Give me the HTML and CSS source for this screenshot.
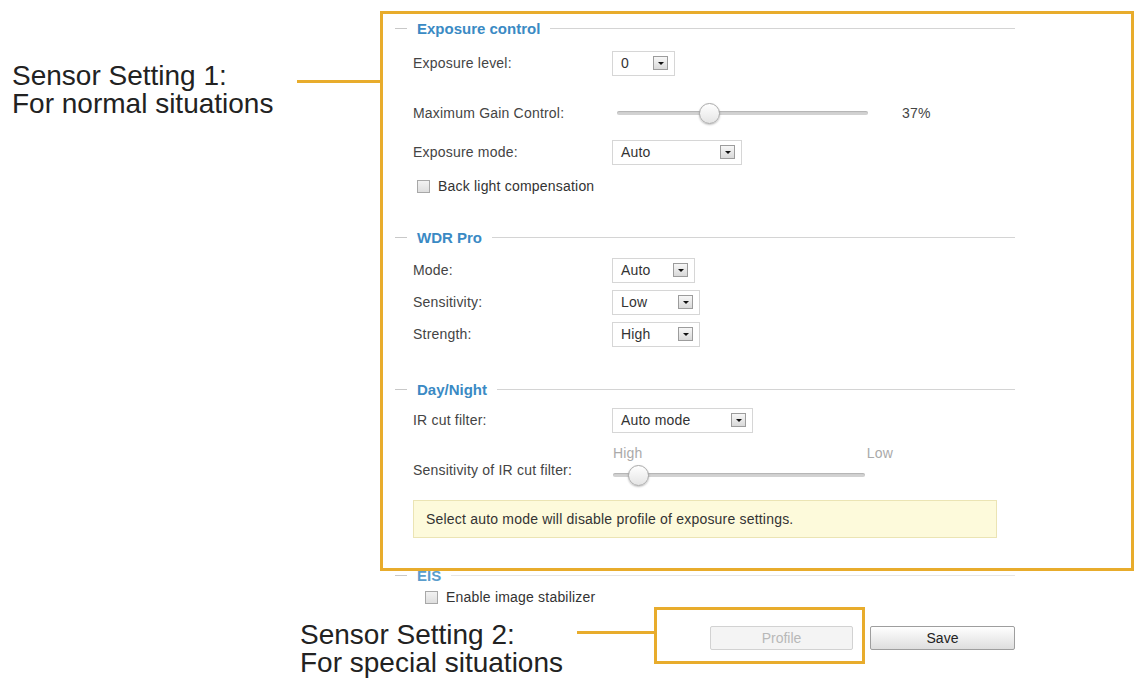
FILE: index.html
```html
<!DOCTYPE html>
<html lang="en">

<head>
  <meta charset="UTF-8">
  <meta name="viewport" content="width=device-width, initial-scale=1.0">
  <title>Image Adjustment - Sensor Settings</title>
  <link rel="stylesheet" href="styles.css">
</head>

<body>
  <div class="page">
    <form class="settings">
      <!-- Exposure control -->
      <div class="group">
        <div class="legend"><span class="dash"></span><span class="legend-title">Exposure control</span><span class="rule"></span></div>
        <div class="row row-50">
          <label>Exposure level:</label>
          <div class="select w-63"><span>0</span><i class="arrow"></i></div>
        </div>
        <div class="row row-50">
          <label>Maximum Gain Control:</label>
          <div class="range-cell">
            <div class="slider gain-slider"><span class="thumb" style="left: 37%;"></span></div>
            <span class="range-value">37%</span>
          </div>
        </div>
        <div class="row row-28">
          <label>Exposure mode:</label>
          <div class="select w-130"><span>Auto</span><i class="arrow"></i></div>
        </div>
        <div class="check check-backlight"><span class="box"></span><span>Back light compensation</span></div>
      </div>

      <!-- WDR Pro -->
      <div class="group group-wdr">
        <div class="legend"><span class="dash"></span><span class="legend-title">WDR Pro</span><span class="rule"></span></div>
        <div class="rows">
          <div class="row">
            <label>Mode:</label>
            <div class="select w-83"><span>Auto</span><i class="arrow"></i></div>
          </div>
          <div class="row">
            <label>Sensitivity:</label>
            <div class="select w-88"><span>Low</span><i class="arrow"></i></div>
          </div>
          <div class="row">
            <label>Strength:</label>
            <div class="select w-88"><span>High</span><i class="arrow"></i></div>
          </div>
        </div>
      </div>

      <!-- Day/Night -->
      <div class="group group-daynight">
        <div class="legend"><span class="dash"></span><span class="legend-title">Day/Night</span><span class="rule"></span></div>
        <div class="rows">
          <div class="row row-28">
            <label>IR cut filter:</label>
            <div class="select w-141"><span>Auto mode</span><i class="arrow"></i></div>
          </div>
          <div class="row row-ir">
            <label class="label-bottom">Sensitivity of IR cut filter:</label>
            <div class="ir-range">
              <div class="scale"><span>High</span><span>Low</span></div>
              <div class="slider-wrap">
                <div class="slider ir-slider"><span class="thumb" style="left: 10%;"></span></div>
              </div>
            </div>
          </div>
        </div>
        <div class="note">Select auto mode will disable profile of exposure settings.</div>
      </div>

      <!-- EIS -->
      <div class="group group-eis">
        <div class="legend legend-eis"><span class="dash"></span><span class="legend-title">EIS</span><span class="rule"></span></div>
        <div class="check check-eis"><span class="box"></span><span>Enable image stabilizer</span></div>
      </div>

      <div class="actions">
        <button type="button" class="btn btn-profile" disabled>Profile</button>
        <button type="button" class="btn btn-save">Save</button>
      </div>
    </form>

    <!-- annotations -->
    <div class="frame frame-1"></div>
    <div class="frame frame-2"></div>
    <div class="leader leader-1"></div>
    <div class="leader leader-2"></div>
    <p class="callout callout-1">Sensor Setting 1:<br>For normal situations</p>
    <p class="callout callout-2">Sensor Setting 2:<br>For special situations</p>
  </div>
</body>

</html>
```

FILE: styles.css
```css
* {
  box-sizing: border-box;
  margin: 0;
  padding: 0;
}

body {
  background: #fff;
  font-family: 'Liberation Sans', Arial, sans-serif;
  color: #444;
}

.page {
  position: relative;
  width: 1140px;
  height: 678px;
  overflow: hidden;
}

.settings {
  width: 620px;
  margin-left: 395px;
  padding-top: 18px;
  font-size: 14px;
  letter-spacing: 0.2px;
}

/* section headings */
.legend {
  display: flex;
  align-items: center;
  height: 20px;
}

.legend .dash {
  width: 12px;
  border-top: 1px solid #c8c8c8;
}

.legend-title {
  margin: 0 10px;
  font-size: 15px;
  font-weight: bold;
  color: #3a8ac4;
  letter-spacing: 0;
}

.legend .rule {
  flex: 1;
  border-top: 1px solid #d4d4d4;
}

.legend-eis .legend-title {
  color: #5a9dcc;
}

.legend-eis .rule {
  border-top-color: #e6e6e6;
}

.group-wdr {
  margin-top: 21px;
}

.group-daynight {
  margin-top: 29px;
}

.group-eis {
  margin-top: 27px;
}

.rows {
  margin-top: 7px;
}

/* form rows */
.row {
  display: grid;
  grid-template-columns: 199px 1fr;
  align-items: center;
  height: 32px;
  padding-left: 18px;
}

.row-50 {
  height: 50px;
}

.row-28 {
  height: 28px;
}

.row-ir {
  height: 48px;
  margin-top: 8px;
  align-items: stretch;
}

.label-bottom {
  align-self: end;
  line-height: 28px;
  padding-bottom: 6px;
}

/* dropdowns */
.select {
  display: flex;
  align-items: center;
  justify-content: space-between;
  height: 25px;
  padding: 0 6px 0 8px;
  border: 1px solid #d6d6d6;
  background: #fff;
  color: #333;
}

.w-63 { width: 63px; }
.w-83 { width: 83px; }
.w-88 { width: 88px; }
.w-130 { width: 130px; }
.w-141 { width: 141px; }

.arrow {
  display: flex;
  align-items: center;
  justify-content: center;
  width: 15px;
  height: 14px;
  border: 1px solid #9c9c9c;
  background: linear-gradient(#f7f7f7, #d9d9d9);
}

.arrow::after {
  content: '';
  border-left: 3px solid transparent;
  border-right: 3px solid transparent;
  border-top: 3px solid #111;
}

/* sliders */
.range-cell {
  display: flex;
  align-items: center;
}

.slider {
  position: relative;
  height: 4px;
  border-radius: 2px;
  background: #d2d2d2;
  box-shadow: inset 0 1px 1px rgba(0, 0, 0, 0.15);
}

.gain-slider {
  width: 251px;
  margin-left: 5px;
}

.range-value {
  margin-left: 34px;
}

.thumb {
  position: absolute;
  top: 50%;
  width: 21px;
  height: 21px;
  margin: -10.5px 0 0 -10.5px;
  border-radius: 50%;
  border: 1px solid #a9a9a9;
  background: linear-gradient(#ffffff, #e4e4e4);
  box-shadow: 0 1px 2px rgba(0, 0, 0, 0.25);
}

.ir-range {
  width: 281px;
  padding-left: 1px;
}

.scale {
  display: flex;
  justify-content: space-between;
  height: 19px;
  padding-top: 3px;
  line-height: 16px;
  color: #aaa;
}

.slider-wrap {
  display: flex;
  align-items: center;
  height: 28px;
}

.ir-slider {
  width: 252px;
}

/* checkboxes */
.check {
  display: flex;
  align-items: center;
  gap: 8px;
  color: #333;
}

.check .box {
  width: 13px;
  height: 13px;
  border: 1px solid #a8a8a8;
  background: linear-gradient(#f2f2f2, #dedede);
}

.check-backlight {
  height: 40px;
  padding-left: 22px;
}

.check-eis {
  height: 24px;
  padding-left: 30px;
}

/* info note */
.note {
  display: flex;
  align-items: center;
  width: 584px;
  height: 38px;
  margin: 10px 0 0 18px;
  padding-left: 12px;
  background: #fdfadb;
  border: 1px solid #ebe4b4;
  color: #333;
}

/* buttons */
.actions {
  display: flex;
  justify-content: flex-end;
  gap: 17px;
  margin-top: 17px;
}

.btn {
  height: 24px;
  font: inherit;
  border-radius: 2px;
}

.btn-profile {
  width: 143px;
  background: #f4f4f4;
  border: 1px solid #d2d2d2;
  color: #b8b8b8;
}

.btn-save {
  width: 145px;
  background: linear-gradient(#ffffff, #dedede);
  border: 1px solid #9e9e9e;
  color: #222;
}

/* annotation overlay */
.frame {
  position: absolute;
  border: 3px solid #e8ac2c;
}

.frame-1 {
  left: 380px;
  top: 11px;
  width: 754px;
  height: 560px;
}

.frame-2 {
  left: 654px;
  top: 607px;
  width: 211px;
  height: 57px;
}

.leader {
  position: absolute;
  height: 3px;
  background: #e8ac2c;
}

.leader-1 {
  left: 297px;
  top: 80px;
  width: 84px;
}

.leader-2 {
  left: 577px;
  top: 631px;
  width: 78px;
}

.callout {
  position: absolute;
  font-size: 28px;
  line-height: 28px;
  color: #222;
}

.callout-1 {
  left: 12px;
  top: 62px;
}

.callout-2 {
  left: 300px;
  top: 621px;
}
```
